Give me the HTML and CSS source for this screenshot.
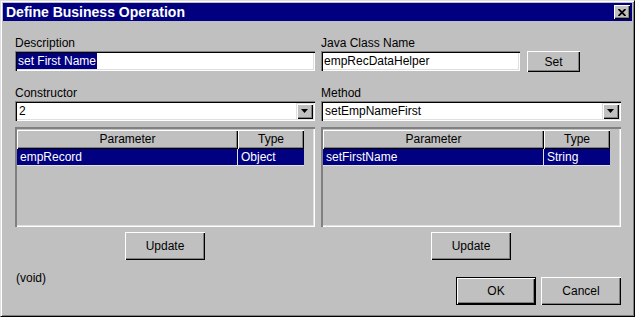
FILE: index.html
```html
<!DOCTYPE html>
<html lang="en">
<head>
    <meta charset="UTF-8">
    <title>Define Business Operation</title>
    <link rel="stylesheet" href="styles.css">
</head>
<body>
    <!-- Dialog Window -->
    <div class="window">
        <div class="titlebar">
            <span class="title">Define Business Operation</span>
            <button class="close-btn">
                <svg width="8" height="7" viewBox="0 0 8 7"><path d="M0.5 0 L7.5 7 M7.5 0 L0.5 7" stroke="#000" stroke-width="1.8"/></svg>
            </button>
        </div>

        <div class="content">
            <div class="columns">
                <!-- Left column -->
                <div class="column">
                    <div class="label">Description</div>
                    <div class="field"><span class="selected-text">set First Name</span></div>

                    <div class="label label-gap">Constructor</div>
                    <div class="field combo">
                        <span class="combo-value">2</span>
                        <span class="combo-arrow"><svg width="7" height="4" viewBox="0 0 7 4"><polygon points="0,0 7,0 3.5,4" fill="#000"/></svg></span>
                    </div>

                    <div class="grid-box">
                        <div class="grid-header">
                            <div class="col-param">Parameter</div>
                            <div class="col-type">Type</div>
                        </div>
                        <div class="grid-row selected">
                            <div class="col-param">empRecord</div>
                            <div class="col-type">Object</div>
                        </div>
                    </div>

                    <div class="button-row">
                        <button class="btn">Update</button>
                    </div>
                </div>

                <!-- Right column -->
                <div class="column">
                    <div class="label">Java Class Name</div>
                    <div class="class-row">
                        <div class="field class-field">empRecDataHelper</div>
                        <button class="btn btn-set">Set</button>
                    </div>

                    <div class="label label-gap-small">Method</div>
                    <div class="field combo">
                        <span class="combo-value">setEmpNameFirst</span>
                        <span class="combo-arrow"><svg width="7" height="4" viewBox="0 0 7 4"><polygon points="0,0 7,0 3.5,4" fill="#000"/></svg></span>
                    </div>

                    <div class="grid-box">
                        <div class="grid-header">
                            <div class="col-param">Parameter</div>
                            <div class="col-type">Type</div>
                        </div>
                        <div class="grid-row selected">
                            <div class="col-param">setFirstName</div>
                            <div class="col-type">String</div>
                        </div>
                    </div>

                    <div class="button-row">
                        <button class="btn">Update</button>
                    </div>
                </div>
            </div>

            <div class="footer">
                <div class="return-type">(void)</div>
                <div class="dialog-buttons">
                    <button class="btn btn-default">OK</button>
                    <button class="btn">Cancel</button>
                </div>
            </div>
        </div>
    </div>
</body>
</html>
```

FILE: styles.css
```css
/* General Styles */
* {
    margin: 0;
    padding: 0;
    box-sizing: border-box;
    font-family: "Liberation Sans", Arial, sans-serif;
}

body {
    background-color: #c0c0c0;
    color: #000;
    font-size: 12px;
    line-height: 14px;
}

/* Window frame */
.window {
    width: 635px;
    height: 317px;
    background: #c0c0c0;
    border: 1px solid;
    border-color: #dfdfdf #000 #000 #dfdfdf;
    padding: 2px;
    box-shadow: inset 1px 1px #fff, inset -1px -1px #808080;
}

.titlebar {
    height: 18px;
    background: #000080;
    display: flex;
    align-items: center;
    justify-content: space-between;
    padding: 0 2px 0 3px;
}

.title {
    color: #fff;
    font-size: 14px;
    font-weight: bold;
    line-height: 18px;
}

.close-btn {
    width: 16px;
    height: 14px;
    border: none;
    background: #c0c0c0;
    display: flex;
    align-items: center;
    justify-content: center;
    box-shadow: inset 1px 1px #fff, inset -1px -1px #000, inset -2px -2px #808080;
}

.close-btn svg {
    display: block;
    margin-left: -1px;
}

/* Content */
.content {
    padding: 15px 11px 0 12px;
}

.columns {
    display: grid;
    grid-template-columns: 300px 300px;
    column-gap: 6px;
}

.column {
    display: flex;
    flex-direction: column;
    align-items: stretch;
}

.label {
    height: 14px;
    margin-bottom: 1px;
}

.label-gap {
    margin-top: 15px;
}

.label-gap-small {
    margin-top: 14px;
}

/* Sunken fields */
.field {
    height: 20px;
    background: #fff;
    padding: 2px 2px 2px 3px;
    line-height: 16px;
    white-space: nowrap;
    box-shadow: inset 1px 1px #808080, inset 2px 2px #000, inset -1px -1px #fff, inset -2px -2px #dfdfdf;
}

.field:has(.selected-text) {
    padding-left: 2px;
}

.selected-text {
    display: inline-block;
    height: 16px;
    background: #000080;
    color: #fff;
    padding: 0 1px;
}

.class-row {
    display: flex;
    align-items: flex-start;
    gap: 7px;
}

.class-field {
    width: 199px;
}

.combo {
    display: flex;
    justify-content: space-between;
    padding-right: 2px;
}

.combo-value {
    padding-left: 1px;
}

.combo-arrow {
    width: 17px;
    height: 16px;
    background: #c0c0c0;
    display: flex;
    align-items: center;
    justify-content: center;
    box-shadow: inset 1px 1px #dfdfdf, inset 2px 2px #fff, inset -1px -1px #000, inset -2px -2px #808080;
}

.combo-arrow svg {
    display: block;
}

/* Parameter grid */
.grid-box {
    margin-top: 6px;
    height: 100px;
    padding: 3px 2px 2px 2px;
    box-shadow: inset 2px 2px #808080, inset -1px -1px #fff, inset -2px -2px #dfdfdf;
}

.grid-header,
.grid-row {
    display: flex;
    width: 287px;
}

.grid-header div {
    height: 19px;
    line-height: 19px;
    text-align: center;
    box-shadow: inset 1px 1px #fff, inset -1px -1px #000, inset -2px -2px #808080;
}

.col-param {
    width: 221px;
}

.col-type {
    width: 66px;
}

.grid-row div {
    height: 17px;
    line-height: 16px;
    padding-left: 3px;
    border-bottom: 1px solid #e0e0e0;
}

.grid-row .col-param {
    border-right: 1px solid #e0e0e0;
}

.grid-row.selected {
    background: #000080;
    color: #fff;
}

/* Buttons */
.btn {
    width: 80px;
    height: 28px;
    border: none;
    background: #c0c0c0;
    color: #000;
    font-size: 12px;
    box-shadow: inset 1px 1px #fff, inset -1px -1px #000, inset -2px -2px #808080;
}

.btn-set {
    width: 53px;
    height: 21px;
}

.btn-default {
    border: 1px solid #000;
}

.button-row {
    display: flex;
    justify-content: center;
    margin-top: 5px;
}

/* Footer */
.footer {
    display: flex;
    justify-content: space-between;
    align-items: flex-start;
    margin-top: 11px;
}

.return-type {
    padding-left: 1px;
}

.dialog-buttons {
    display: flex;
    gap: 5px;
    margin-top: 6px;
}
```
